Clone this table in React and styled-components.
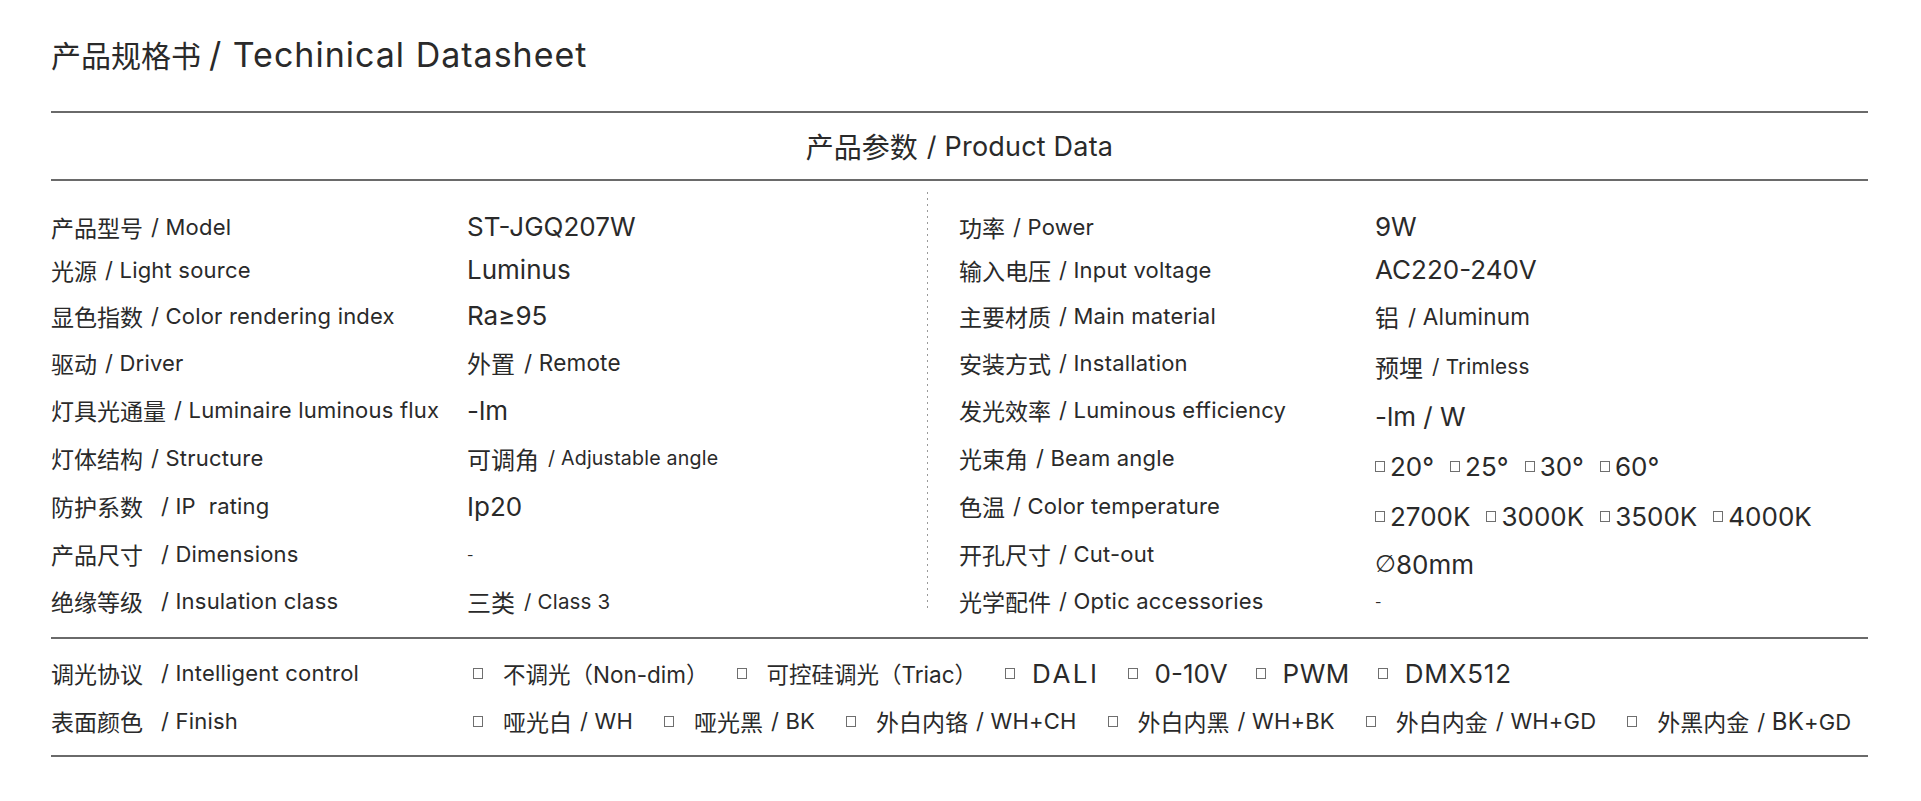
import styled, { createGlobalStyle } from "styled-components";

const GlobalStyle = createGlobalStyle`
  body {
    margin: 0;
    background: #fff;
    color: #2a2a2a;
    font-family: "Inter", "Noto Sans CJK SC", sans-serif;
  }
`;

const Page = styled.div`
  padding: 0 53px 0 51px;
`;

const Title = styled.h1`
  margin: 0;
  padding: 37px 0;
  font-size: 30px;
  line-height: 36px;
  font-weight: 400;
`;

const SectionHead = styled.div`
  border-top: 2px solid #6a6a6a;
  border-bottom: 2px solid #6a6a6a;
  height: 66px;
  display: flex;
  align-items: center;
  justify-content: center;
  font-size: 28px;
`;

const Body = styled.div`
  display: grid;
  grid-template-columns: 876px 1px 1fr;
  border-bottom: 2px solid #6a6a6a;
`;

const Half = styled.div`
  display: grid;
  grid-template-columns: 416px 1fr;
  grid-template-rows: 41px 45px 47px 47px 48px 48px 48px 48px 46px;
  padding: 25px 0 13px ${(p) => (p.$right ? "31px" : "0")};
`;

const Divider = styled.div`
  margin: 11px 0 27px;
  background-image: linear-gradient(#9a9a9a 34%, transparent 0);
  background-size: 1px 6px;
`;

const Label = styled.div`
  display: flex;
  align-items: center;
  font-size: 23px;
  white-space: pre;
`;

const Value = styled.div`
  display: flex;
  align-items: center;
  font-size: 26px;
  white-space: pre;
  padding-top: ${(p) => (p.$dy ? p.$dy * 2 : 0)}px;
`;

const CjkValue = styled.span`
  font-size: 24px;
`;

const En = styled.span`
  font-size: ${(p) => p.$size || 22}px;
  margin-left: ${(p) => p.$gap || 8}px;
  letter-spacing: ${(p) => (p.$spacing === undefined ? 0.2 : p.$spacing)}px;
`;

const Big = styled.span`
  font-size: 24px;
`;

const Diameter = styled.span`
  font-family: "DejaVu Sans", sans-serif;
  font-size: 24px;
`;

const Dash = styled.span`
  font-size: 14px;
`;

const Box = styled.span`
  display: inline-block;
  width: 8px;
  height: 9px;
  border: 1px solid #6f6f6f;
  margin-right: ${(p) => p.$gap || 5}px;
  flex-shrink: 0;
`;

const Choices = styled.div`
  display: flex;
  align-items: center;
  gap: 16px;
`;

const Choice = styled.span`
  display: inline-flex;
  align-items: center;
`;

const Controls = styled.div`
  display: grid;
  grid-template-columns: 416px 1fr;
  grid-template-rows: 48px 48px;
  padding: 10px 0 10px;
  border-bottom: 2px solid #6a6a6a;
`;

const OptionRow = styled.div`
  display: flex;
  align-items: center;
  gap: ${(p) => p.$gap || 31}px;
  font-size: ${(p) => p.$size || 22.5}px;
  white-space: pre;
  padding-left: 6px;
`;

const Option = styled.span`
  display: inline-flex;
  align-items: center;
  font-size: ${(p) => (p.$latin ? "26px" : "inherit")};
  letter-spacing: ${(p) => p.$spacing || 0}px;
`;

const left = [
  ["产品型号", "/ Model", "ST-JGQ207W"],
  ["光源", "/ Light source", "Luminus"],
  ["显色指数", "/ Color rendering index", "Ra≥95"],
  ["驱动", "/ Driver", ["外置", "/ Remote", 22.5]],
  ["灯具光通量", "/ Luminaire luminous flux", "-lm"],
  ["灯体结构", "/ Structure", ["可调角", "/ Adjustable angle", 19.6]],
  ["防护系数", "/ IP  rating", "Ip20", true],
  ["产品尺寸", "/ Dimensions", "-", true],
  ["绝缘等级", "/ Insulation class", ["三类", "/ Class 3", 20.5], true],
];

const right = [
  ["功率", "/ Power", "9W", 0],
  ["输入电压", "/ Input voltage", "AC220-240V", -1],
  ["主要材质", "/ Main material", ["铝", "/ Aluminum", 22.5], 1],
  ["安装方式", "/ Installation", ["预埋", "/ Trimless", 20.7], 4],
  ["发光效率", "/ Luminous efficiency", "-lm / W", 6],
  ["光束角", "/ Beam angle", "beam", 8],
  ["色温", "/ Color temperature", "cct", 10],
  ["开孔尺寸", "/ Cut-out", "dia", 10],
  ["光学配件", "/ Optic accessories", "-", 0],
];

const beams = ["20°", "25°", "30°", "60°"];
const ccts = ["2700K", "3000K", "3500K", "4000K"];

function renderValue(v) {
  if (Array.isArray(v)) {
    return (
      <>
        <CjkValue>{v[0]}</CjkValue>
        <En $size={v[2]} $gap={9}>
          {v[1]}
        </En>
      </>
    );
  }
  if (v === "beam" || v === "cct") {
    return (
      <Choices>
        {(v === "beam" ? beams : ccts).map((t) => (
          <Choice key={t}>
            <Box />
            {t}
          </Choice>
        ))}
      </Choices>
    );
  }
  if (v === "dia") {
    return (
      <>
        <Diameter>∅</Diameter>80mm
      </>
    );
  }
  if (v === "-") return <Dash>-</Dash>;
  return v;
}

// [text, latin, letter-spacing]
const dimming = [
  ["不调光（Non-dim）"],
  ["可控硅调光（Triac）"],
  ["DALI", true, 2.5],
  ["0-10V", true],
  ["PWM", true, 0.5],
  ["DMX512", true, 0.8],
];

const finishes = [
  ["哑光白", "WH"],
  ["哑光黑", "BK"],
  ["外白内铬", "WH+CH"],
  ["外白内黑", "WH+BK"],
  ["外白内金", "WH+GD"],
  ["外黑内金", "+GD", "BK"],
];

function SpecRow({ cn, en, wide, children, dy }) {
  return (
    <>
      <Label>
        {cn}
        <En $gap={wide ? 18 : 8}>{en}</En>
      </Label>
      <Value $dy={dy}>{children}</Value>
    </>
  );
}

export default function App() {
  return (
    <Page>
      <GlobalStyle />
      <Title>
        产品规格书
        <En $size={34} $gap={8} $spacing={1}>
          / Techinical Datasheet
        </En>
      </Title>
      <SectionHead>
        产品参数
        <En $size={27} $gap={9}>
          / Product Data
        </En>
      </SectionHead>
      <Body>
        <Half>
          {left.map(([cn, en, v, wide]) => (
            <SpecRow key={cn} cn={cn} en={en} wide={wide}>
              {renderValue(v)}
            </SpecRow>
          ))}
        </Half>
        <Divider />
        <Half $right>
          {right.map(([cn, en, v, dy]) => (
            <SpecRow key={cn} cn={cn} en={en} dy={dy}>
              {renderValue(v)}
            </SpecRow>
          ))}
        </Half>
      </Body>
      <Controls>
        <Label>
          调光协议
          <En $gap={18}>/ Intelligent control</En>
        </Label>
        <OptionRow $gap={28}>
          {dimming.map(([d, latin, spacing]) => (
            <Option key={d} $latin={latin} $spacing={spacing}>
              <Box $gap={latin ? 17 : 20} />
              {d}
            </Option>
          ))}
        </OptionRow>
        <Label>
          表面颜色
          <En $gap={18}>/ Finish</En>
        </Label>
        <OptionRow $size={23}>
          {finishes.map(([cn, en, big]) => (
            <Option key={cn}>
              <Box $gap={20} />
              {cn}
              <En $size={22} $gap={8}>
                / {big && <Big>{big}</Big>}
                {en}
              </En>
            </Option>
          ))}
        </OptionRow>
      </Controls>
    </Page>
  );
}
